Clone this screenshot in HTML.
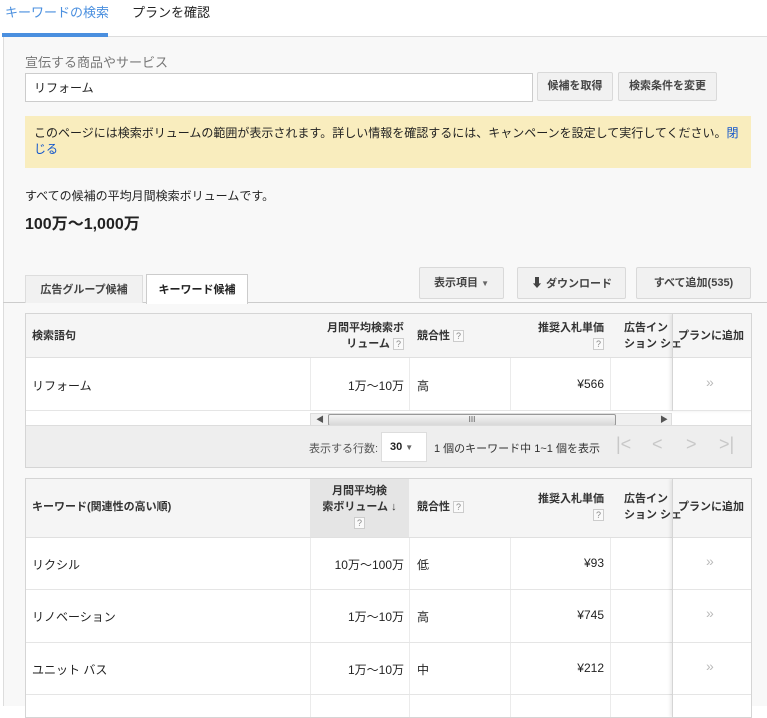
<!DOCTYPE html>
<html><head><meta charset="utf-8"><style>
*{box-sizing:border-box;margin:0;padding:0}
body{width:767px;height:706px;overflow:hidden;background:#fff;font-family:"Liberation Sans","Noto Sans CJK JP",sans-serif;font-size:13px;color:#222;position:relative}
.a{position:absolute}
.btn{position:absolute;background:#f1f1f1;border:1px solid #d9d9d9;border-radius:2px;font-size:11px;font-weight:bold;color:#444;text-align:center;white-space:nowrap}
.tbl{position:absolute;left:25px;width:727px;border:1px solid #d5d5d5;background:#fff;overflow:hidden}
.hd{position:absolute;left:0;top:0;width:100%;background:#f5f5f5;border-bottom:1px solid #e0e0e0}
.hc{position:absolute;font-size:11px;font-weight:bold;color:#333;line-height:16px}
.q{display:inline-block;width:11px;height:12px;border:1px solid #ccc;background:#fafafa;font-size:9px;color:#888;text-align:center;line-height:10px;font-weight:normal;vertical-align:middle}
.vl{position:absolute;top:0;bottom:0;width:1px;background:#ebebeb}
.row{position:absolute;left:0;width:100%;border-bottom:1px solid #e5e5e5}
.c{position:absolute;font-size:12px;color:#222}
.fr{position:absolute;left:646px;top:0;bottom:0;width:81px;border-left:1px solid #d5d5d5;box-shadow:-2px 0 3px rgba(0,0,0,.08)}
.ar{position:absolute;left:682px;color:#bbb;font-size:14px}
</style></head><body>
<div class="a" style="left:5px;top:2px;color:#4a8fdf;font-size:13px">キーワードの検索</div>
<div class="a" style="left:132px;top:2px;color:#222;font-size:13px">プランを確認</div>
<div class="a" style="left:2px;top:33px;width:106px;height:4px;background:#4a8fdf"></div>
<div class="a" style="left:108px;top:36px;width:659px;height:1px;background:#ddd"></div>
<div class="a" style="left:3px;top:37px;width:764px;height:669px;background:#f8f8f8;border-left:1px solid #ddd"></div>

<div class="a" style="left:25px;top:52px;color:#777;font-size:13px">宣伝する商品やサービス</div>
<div class="a" style="left:25px;top:73px;width:508px;height:29px;background:#fff;border:1px solid #ccc;padding:5px 8px;font-size:12px">リフォーム</div>
<div class="btn" style="left:537px;top:72px;width:76px;height:29px;line-height:27px">候補を取得</div>
<div class="btn" style="left:618px;top:72px;width:99px;height:29px;line-height:27px">検索条件を変更</div>

<div class="a" style="left:25px;top:116px;width:726px;height:52px;background:#f9edbe;padding:9px 9px;font-size:12px;line-height:16px;color:#222">このページには検索ボリュームの範囲が表示されます。詳しい情報を確認するには、キャンペーンを設定して実行してください。<span style="color:#1155cc">閉じる</span></div>

<div class="a" style="left:25px;top:187px;font-size:12px">すべての候補の平均月間検索ボリュームです。</div>
<div class="a" style="left:25px;top:210px;font-size:16px;font-weight:bold">100万〜1,000万</div>

<div class="a" style="left:3px;top:302px;width:764px;height:1px;background:#ccc"></div>
<div class="a" style="left:25px;top:275px;width:118px;height:28px;background:#f1f1f1;border:1px solid #ddd;border-bottom:none;font-size:11px;font-weight:bold;color:#444;text-align:center;line-height:28px;white-space:nowrap">広告グループ候補</div>
<div class="a" style="left:146px;top:274px;width:102px;height:30px;background:#fff;border:1px solid #ccc;border-bottom:none;font-size:11px;font-weight:bold;color:#222;text-align:center;line-height:30px;white-space:nowrap">キーワード候補</div>
<div class="btn" style="left:419px;top:267px;width:85px;height:32px;line-height:30px">表示項目 <span style="font-size:8px;color:#666">▼</span></div>
<div class="btn" style="left:517px;top:267px;width:109px;height:32px;line-height:30px"><span style="font-size:12px">⬇</span> ダウンロード</div>
<div class="btn" style="left:636px;top:267px;width:115px;height:32px;line-height:30px">すべて追加(535)</div>

<div class="tbl" style="top:313px;height:155px">
 <div class="hd" style="height:44px"></div>
 <div class="vl" style="left:284px;top:44px;height:53px"></div>
 <div class="vl" style="left:383px;top:44px;height:53px"></div>
 <div class="vl" style="left:484px;top:44px;height:53px"></div>
 <div class="vl" style="left:584px;top:44px;height:53px"></div>
 <div class="hc" style="left:6px;top:14px">検索語句</div>
 <div class="hc" style="left:284px;top:6px;width:94px;text-align:right">月間平均検索ボ<br>リューム <span class="q">?</span></div>
 <div class="hc" style="left:391px;top:14px">競合性 <span class="q">?</span></div>
 <div class="hc" style="left:484px;top:6px;width:94px;text-align:right">推奨入札単価<br><span class="q">?</span></div>
 <div class="hc" style="left:598px;top:6px;white-space:nowrap">広告イン<br>ション シェ</div>
 <div class="row" style="top:44px;height:53px"></div>
 <div class="c" style="left:6px;top:63px">リフォーム</div>
 <div class="c" style="left:284px;top:63px;width:94px;text-align:right">1万〜10万</div>
 <div class="c" style="left:391px;top:63px">高</div>
 <div class="c" style="left:484px;top:63px;width:94px;text-align:right">¥566</div>
 <div class="a" style="left:284px;top:99px;width:362px;height:14px;background:#f0f0f0;border:1px solid #ddd"></div>
 <div class="a" style="left:290px;top:100px;font-size:8px;color:#555">◀</div>
 <div class="a" style="left:302px;top:100px;width:288px;height:12px;background:linear-gradient(#f4f4f4,#d8d8d8);border:1px solid #999;border-radius:2px;font-size:8px;text-align:center;line-height:10px;color:#555">III</div>
 <div class="a" style="left:634px;top:100px;font-size:8px;color:#555">▶</div>
 <div class="a" style="left:0;top:111px;width:727px;height:44px;background:#eee;border-top:1px solid #ddd"></div>
 <div class="a" style="left:283px;top:126px;font-size:11px;color:#555">表示する行数:</div>
 <div class="a" style="left:355px;top:118px;width:46px;height:30px;background:#fff;border:1px solid #ddd;font-size:11px;font-weight:bold;line-height:28px;padding-left:8px">30 <span style="font-size:8px;color:#666">▼</span></div>
 <div class="a" style="left:408px;top:126px;font-size:11px;color:#333">1 個のキーワード中 1~1 個を表示</div>
 <div class="a" style="left:590px;top:120px;font-size:18px;color:#c8c8c8;letter-spacing:0">|&lt;</div>
 <div class="a" style="left:626px;top:120px;font-size:18px;color:#c8c8c8">&lt;</div>
 <div class="a" style="left:660px;top:120px;font-size:18px;color:#c8c8c8">&gt;</div>
 <div class="a" style="left:693px;top:120px;font-size:18px;color:#c8c8c8">&gt;|</div>
 <div class="fr" style="height:97px;background:transparent"></div>
 <div class="hc" style="left:652px;top:14px">プランに追加</div>
 <div class="ar" style="left:680px;top:60px">»</div>
</div>

<div class="tbl" style="top:478px;height:240px">
 <div class="hd" style="height:59px"></div>
 <div class="a" style="left:284px;top:0;width:99px;height:58px;background:#e5e5e5"></div>
 <div class="vl" style="left:284px;top:59px"></div>
 <div class="vl" style="left:383px;top:59px"></div>
 <div class="vl" style="left:484px;top:59px"></div>
 <div class="vl" style="left:584px;top:59px"></div>
 <div class="hc" style="left:6px;top:20px">キーワード(関連性の高い順)</div>
 <div class="hc" style="left:284px;top:4px;width:99px;text-align:center">月間平均検<br>索ボリューム ↓<br><span class="q">?</span></div>
 <div class="hc" style="left:391px;top:20px">競合性 <span class="q">?</span></div>
 <div class="hc" style="left:484px;top:12px;width:94px;text-align:right">推奨入札単価<br><span class="q">?</span></div>
 <div class="hc" style="left:598px;top:12px;white-space:nowrap">広告イン<br>ション シェ</div>
 <div class="row" style="top:59px;height:52px"></div>
 <div class="row" style="top:111px;height:53px"></div>
 <div class="row" style="top:164px;height:52px"></div>
 <div class="c" style="left:6px;top:77px">リクシル</div>
 <div class="c" style="left:284px;top:77px;width:94px;text-align:right">10万〜100万</div>
 <div class="c" style="left:391px;top:77px">低</div>
 <div class="c" style="left:484px;top:77px;width:94px;text-align:right">¥93</div>
 <div class="c" style="left:6px;top:129px">リノベーション</div>
 <div class="c" style="left:284px;top:129px;width:94px;text-align:right">1万〜10万</div>
 <div class="c" style="left:391px;top:129px">高</div>
 <div class="c" style="left:484px;top:129px;width:94px;text-align:right">¥745</div>
 <div class="c" style="left:6px;top:182px">ユニット バス</div>
 <div class="c" style="left:284px;top:182px;width:94px;text-align:right">1万〜10万</div>
 <div class="c" style="left:391px;top:182px">中</div>
 <div class="c" style="left:484px;top:182px;width:94px;text-align:right">¥212</div>
 <div class="fr"></div>
 <div class="hc" style="left:652px;top:20px">プランに追加</div>
 <div class="ar" style="left:680px;top:74px">»</div>
 <div class="ar" style="left:680px;top:126px">»</div>
 <div class="ar" style="left:680px;top:179px">»</div>
</div>
</body></html>
